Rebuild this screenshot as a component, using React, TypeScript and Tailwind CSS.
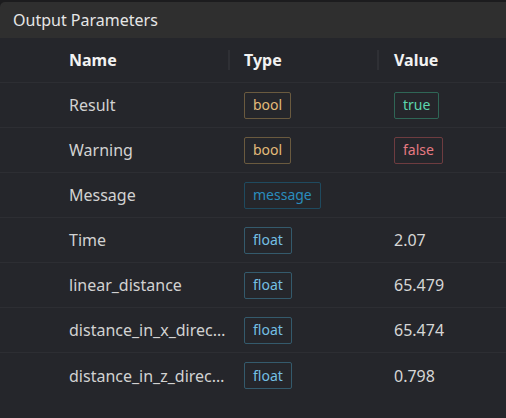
import React from "react";

type Tone = "bool" | "message" | "float" | "true" | "false";

const tones: Record<Tone, string> = {
  bool: "border-[#6a5a3f] text-[#e3bb7a]",
  message: "border-[#1f4a5f] text-[#2a8dbd]",
  float: "border-[#345a6c] text-[#74bfe3]",
  true: "border-[#2f6656] text-[#5cd6ae]",
  false: "border-[#6e3c40] text-[#e57a82]",
};

const Badge: React.FC<{ tone: Tone; children: React.ReactNode }> = ({
  tone,
  children,
}) => (
  <span
    className={`inline-flex h-[27px] items-center rounded-[2px] border px-[8px] text-[14px] leading-none ${tones[tone]}`}
  >
    {children}
  </span>
);

const rows: { name: string; type: Tone; value: React.ReactNode }[] = [
  { name: "Result", type: "bool", value: <Badge tone="true">true</Badge> },
  { name: "Warning", type: "bool", value: <Badge tone="false">false</Badge> },
  { name: "Message", type: "message", value: null },
  { name: "Time", type: "float", value: "2.07" },
  { name: "linear_distance", type: "float", value: "65.479" },
  { name: "distance_in_x_direction", type: "float", value: "65.474" },
  { name: "distance_in_z_direction", type: "float", value: "0.798" },
];

export default function App() {
  return (
    <div
      className="h-[418px] w-[506px] overflow-hidden bg-[#1c1c1e] pt-[2px] text-[16px] text-[#d2d2d2]"
      style={{ fontFamily: '"Noto Sans", "Open Sans", sans-serif' }}
    >
      <div className="flex h-[36px] items-center rounded-tl-[5px] bg-[#2f2f2f] pl-[13px] text-[#e6e6e6]">
        Output Parameters
      </div>
      <div className="h-full bg-[#25262b]">
        <div className="flex h-[45px] items-center border-b border-[#2d2e33] font-bold text-[#f2f2f2]">
          <div className="w-[53px]" />
          <div className="w-[175px] pl-[16px]">Name</div>
          <div className="flex w-[149px] items-center">
            <span className="h-[20px] w-[2px] bg-[#2f3035]" />
            <span className="pl-[14px]">Type</span>
          </div>
          <div className="flex items-center">
            <span className="h-[20px] w-[2px] bg-[#2f3035]" />
            <span className="pl-[15px]">Value</span>
          </div>
        </div>
        {rows.map((r, i) => (
          <div
            key={r.name}
            className={`flex h-[45px] items-center ${
              i < rows.length - 1 ? "border-b border-[#2d2e33]" : ""
            }`}
          >
            <div className="w-[53px]" />
            <div className="w-[175px] truncate pl-[16px]">{r.name}</div>
            <div className="w-[149px] pl-[16px]">
              <Badge tone={r.type}>{r.type}</Badge>
            </div>
            <div className="pl-[17px] text-[#d6d6d6]">{r.value}</div>
          </div>
        ))}
      </div>
    </div>
  );
}
